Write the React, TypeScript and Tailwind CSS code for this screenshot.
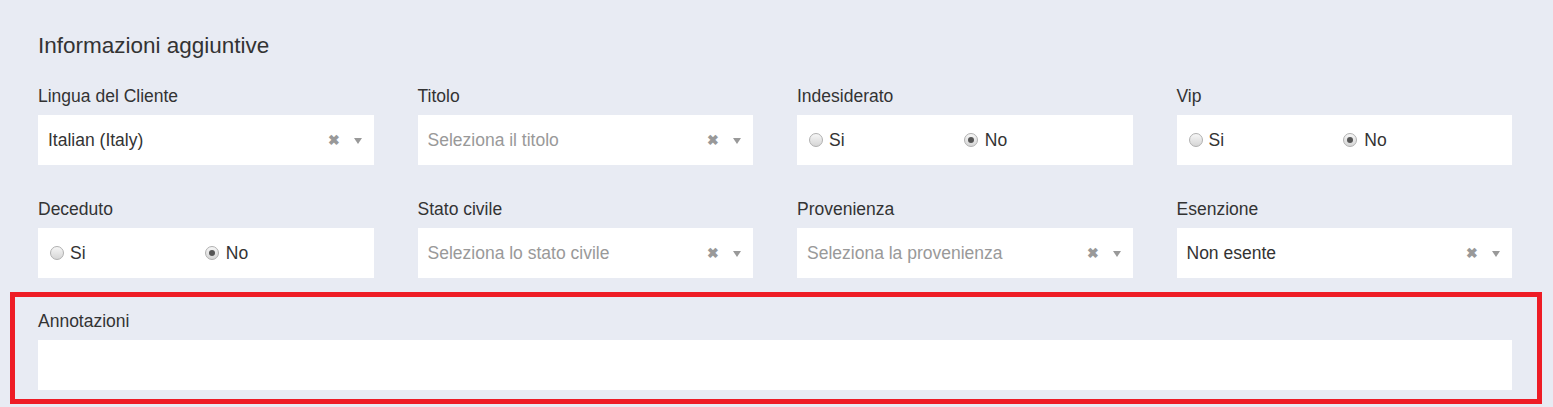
const fontStack = { fontFamily: '"Liberation Sans", Arial, sans-serif' };

function SelectBox({ value, placeholder }: { value?: string; placeholder?: string }) {
  return (
    <div className="flex h-[50px] items-center bg-white pl-[10px] pr-[12px]">
      <span className={`flex-1 truncate text-[17.5px] ${value ? 'text-[#333]' : 'text-[#999]'}`}>
        {value ?? placeholder}
      </span>
      <span className="mr-[14px] text-[14px] font-bold leading-none text-[#999]">✖</span>
      <svg width="8" height="6" viewBox="0 0 8 6" className="mt-[1px]">
        <path d="M0 0 L8 0 L4 6 Z" fill="#999" />
      </svg>
    </div>
  );
}

function Radio({ checked }: { checked?: boolean }) {
  return (
    <span className="relative inline-flex h-[14px] w-[14px] items-center justify-center rounded-full border border-[#b0b0b0] bg-gradient-to-b from-[#f6f6f6] to-[#d6d6d6]">
      {checked && <span className="h-[6px] w-[6px] rounded-full bg-[#555]" />}
    </span>
  );
}

function RadioBox({ value }: { value: 'si' | 'no' }) {
  return (
    <div className="grid h-[50px] grid-cols-2 items-center bg-white">
      <label className="flex items-center gap-[6px] pl-[12px] text-[17.5px] text-[#333]">
        <Radio checked={value === 'si'} />
        Si
      </label>
      <label className="-ml-[1px] flex items-center gap-[7px] text-[17.5px] text-[#333]">
        <Radio checked={value === 'no'} />
        No
      </label>
    </div>
  );
}

function Field({ label, children }: { label: string; children: React.ReactNode }) {
  return (
    <div>
      <p className="mb-[9px] text-[17.5px] leading-[20px] text-[#333]">{label}</p>
      {children}
    </div>
  );
}

export default function App() {
  return (
    <div className="min-h-[407px] bg-[#e8ebf3] pb-[3px] pt-[32px]" style={fontStack}>
      <div className="pl-[38px] pr-[41px]">
        <h2 className="text-[22.5px] leading-[28px] text-[#333]">Informazioni aggiuntive</h2>

        <div className="mt-[26px] grid grid-cols-4 gap-x-[44px] gap-y-[34px]">
          <Field label="Lingua del Cliente">
            <SelectBox value="Italian (Italy)" />
          </Field>
          <Field label="Titolo">
            <SelectBox placeholder="Seleziona il titolo" />
          </Field>
          <Field label="Indesiderato">
            <RadioBox value="no" />
          </Field>
          <Field label="Vip">
            <RadioBox value="no" />
          </Field>
          <Field label="Deceduto">
            <RadioBox value="no" />
          </Field>
          <Field label="Stato civile">
            <SelectBox placeholder="Seleziona lo stato civile" />
          </Field>
          <Field label="Provenienza">
            <SelectBox placeholder="Seleziona la provenienza" />
          </Field>
          <Field label="Esenzione">
            <SelectBox value="Non esente" />
          </Field>
        </div>
      </div>

      <div className="ml-[10px] mt-[14px] w-[1532px] border-[5px] border-[#ee1c25] pb-[9px] pl-[23px] pr-[25px] pt-[14px]">
        <Field label="Annotazioni">
          <div className="h-[50px] bg-white" />
        </Field>
      </div>
    </div>
  );
}
